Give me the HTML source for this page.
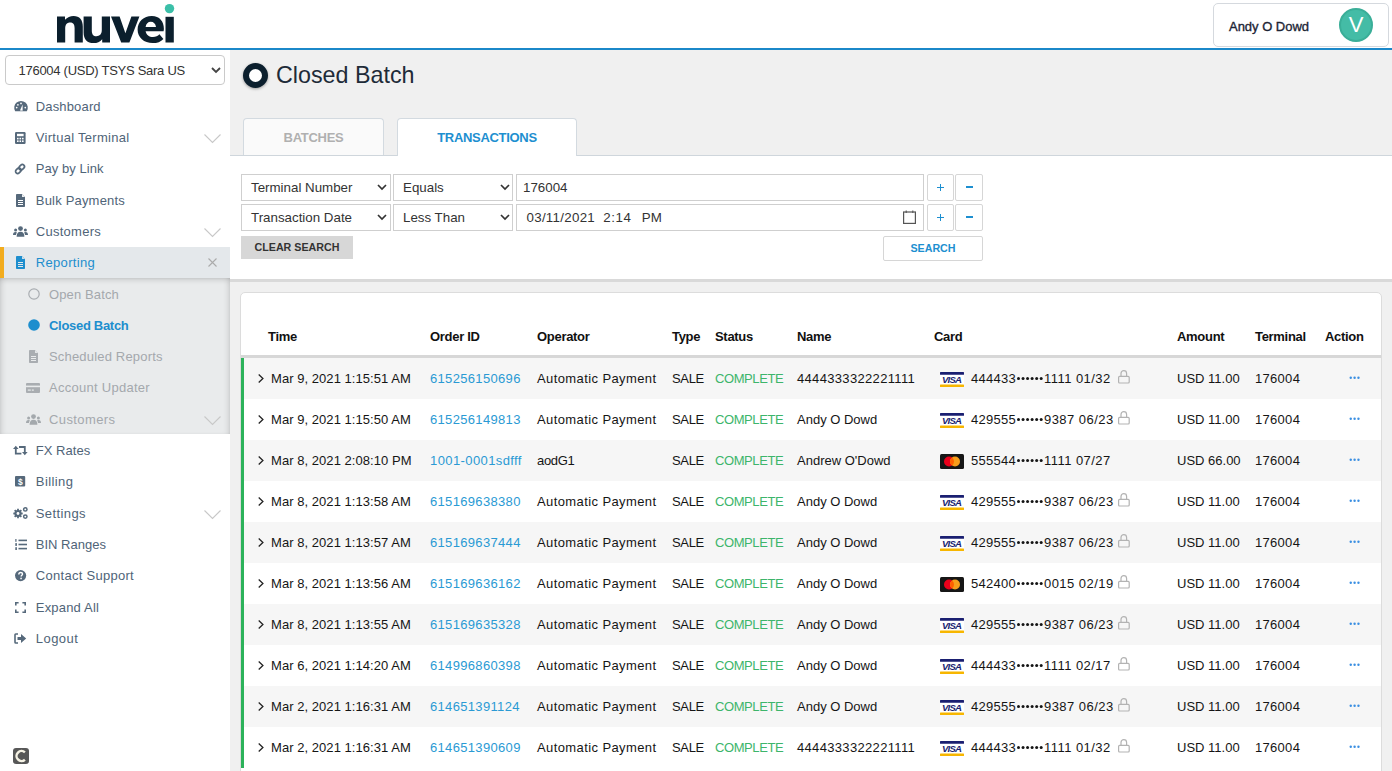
<!DOCTYPE html>
<html><head><meta charset="utf-8"><style>
*{box-sizing:border-box;margin:0;padding:0}
html,body{width:1392px;height:771px;overflow:hidden;background:#f0f0f0;font-family:"Liberation Sans",sans-serif;color:#111}
.a{position:absolute}
svg{position:absolute;overflow:visible}
#hdr{position:absolute;left:0;top:0;width:1392px;height:48px;background:#fff}
#bline{position:absolute;left:0;top:48px;width:1392px;height:2px;background:#1b88c9}
#side{position:absolute;left:0;top:50px;width:230px;height:721px;background:#fff}
.nav{position:absolute;left:0;width:230px;height:31.32px;line-height:31.32px;font-size:13px;color:#4f6478;white-space:nowrap}
.nav .t{position:absolute;left:35.8px;top:0}
.sub .t{left:49px;color:#a4a8ac}
.tab{position:absolute;top:118px;height:38px;border:1px solid #d3dae0;border-bottom:none;border-radius:4px 4px 0 0;font-size:13px;letter-spacing:-0.3px;font-weight:bold;text-align:center;line-height:37px}
.sel{position:absolute;height:27px;border:1px solid #cfcfcf;background:#fff;font-size:13.33px;color:#333;line-height:25px;padding-left:9px;white-space:nowrap}
.sel svg{right:4px}
.btn{position:absolute;border:1px solid #d6d6d6;border-radius:2px;background:#fff;color:#1d8fd0;font-weight:bold;text-align:center}
#card{position:absolute;left:240px;top:292px;width:1142px;height:500px;background:#fff;border:1px solid #dcdcdc;border-radius:5px}
.th{position:absolute;top:327px;font-size:13px;font-weight:bold;color:#111;line-height:20px;white-space:nowrap;letter-spacing:-0.3px}
.row{position:absolute;left:241px;width:1140px;height:41px}
.row.g{background:#f6f6f6}
.c{position:absolute;top:0;line-height:41px;font-size:13px;color:#151515;white-space:nowrap}
</style></head><body>
<div id="hdr"></div><div id="bline"></div><div id="side"></div>
<svg class="a" style="left:0;top:0" width="240" height="48" viewBox="0 0 240 48">
<g fill="#0b1f2d">
<path d="M57,42.5 V16.5 H65 V19.8 C67.2,17.2 70.3,15.9 73.6,15.9 C79.6,15.9 82.8,19.9 82.8,26.6 V42.5 H74.6 V28.2 C74.6,24.3 72.9,22.6 70.1,22.6 C67,22.6 65.2,24.6 65.2,28.6 V42.5 Z"/>
<path d="M83.6,16.5 H91.8 V30.4 C91.8,34.4 93.4,36.2 96.4,36.2 C99.6,36.2 101.8,34.1 101.8,30 V16.5 H110 V42.5 H102.2 V39.2 C100,41.8 97.1,43.1 93.6,43.1 C87.4,43.1 83.6,39.3 83.6,32.4 Z"/>
<path d="M111,16.5 H119.6 L125.4,33.2 L131.4,16.5 H139.4 L129.4,42.5 H121.2 Z"/>
<path d="M163.6,31.2 H145.6 C146.4,34.8 149.1,37 153,37 C155.8,37 157.8,36 159.4,34.3 L163.4,38.9 C160.9,41.7 157.2,43.1 152.7,43.1 C144,43.1 137.6,37.5 137.6,29.5 C137.6,21.6 143.7,15.9 151.8,15.9 C159.6,15.9 163.9,21.2 163.9,29 C163.9,29.7 163.7,30.5 163.6,31.2 Z M145.6,27 H156 C155.6,23.8 153.6,21.8 150.8,21.8 C148,21.8 146,23.8 145.6,27 Z"/>
<rect x="165.5" y="16.8" width="8.3" height="25.7"/>
</g>
<circle cx="169.5" cy="8.6" r="4.7" fill="#3bbfa8"/>
</svg>
<div class="a" style="left:1213px;top:3px;width:176px;height:44px;border:1px solid #d5d9de;border-radius:5px;background:#fff"></div>
<div class="a" style="left:1229px;top:18.2px;font-size:13px;color:#1c2535;line-height:18px;letter-spacing:-0.02px;-webkit-text-stroke:0.35px #1c2535">Andy O Dowd</div>
<div class="a" style="left:1339px;top:8px;width:34px;height:34px;border-radius:50%;background:#44bca6;border:2px solid #3aae98"></div>
<div class="a" style="left:1339px;top:8px;width:34px;height:34px;line-height:34px;text-align:center;color:#fff;font-size:22px">V</div>
<div class="a" style="left:5px;top:55px;width:220px;height:30px;border:1px solid #cacaca;border-radius:4px;background:#fff"></div>
<div class="a" style="left:18.5px;top:60.7px;line-height:20px;font-size:13px;color:#333;white-space:nowrap;letter-spacing:-0.27px">176004 (USD) TSYS Sara US</div>
<svg style="left:211px;top:67px" width="10" height="7" viewBox="0 0 10 7"><path d="M1,1 L5,5 L9,1" fill="none" stroke="#444" stroke-width="1.8"/></svg>
<div class="a" style="left:0;top:247px;width:230px;height:31px;background:#e4e8eb"></div>
<div class="a" style="left:0;top:247px;width:4px;height:31px;background:#f2ac1e"></div>
<div class="a" style="left:0;top:278px;width:230px;height:156px;background:#e9ebec;box-shadow:inset 0 5px 6px -4px rgba(0,0,0,0.18), inset 5px 0 7px -5px rgba(0,0,0,0.2), inset -5px 0 7px -5px rgba(0,0,0,0.2)"></div>
<div class="nav" style="top:90.59px"><span class="t" style=";letter-spacing:0.15px">Dashboard</span></div>
<svg style="left:13.6px;top:101.25px" width="14" height="11" viewBox="0 0 14 11"><path d="M1.2,10.3 A6.8,6.8 0 1 1 12.8,10.3 Z" fill="#56697b"/><path d="M6,9.6 L8.6,3.4 L8.6,9.8 Z" fill="#fff"/><circle cx="2.7" cy="6.6" r="0.85" fill="#fff"/><circle cx="3.9" cy="3.8" r="0.85" fill="#fff"/><circle cx="11.3" cy="6.6" r="0.85" fill="#fff"/><circle cx="7" cy="2.4" r="0.85" fill="#fff"/></svg>
<div class="nav" style="top:121.91px"><span class="t" style=";letter-spacing:0.28px">Virtual Terminal</span></div>
<svg style="left:15px;top:131.57px" width="11" height="12" viewBox="0 0 11 12"><rect x="0" y="0" width="10.6" height="12" rx="1.2" fill="#56697b"/><rect x="2" y="1.8" width="6.6" height="2.4" fill="#fff"/><g fill="#fff"><rect x="2" y="5.8" width="1.6" height="1.6"/><rect x="4.5" y="5.8" width="1.6" height="1.6"/><rect x="7" y="5.8" width="1.6" height="1.6"/><rect x="2" y="8.4" width="1.6" height="1.6"/><rect x="4.5" y="8.4" width="1.6" height="1.6"/><rect x="7" y="8.4" width="1.6" height="1.6"/></g></svg>
<svg style="left:204px;top:134.47px" width="17" height="9" viewBox="0 0 17 9"><path d="M0.5,0.5 L8.5,8.5 L16.5,0.5" fill="none" stroke="#c8c8c8" stroke-width="1.1"/></svg>
<div class="nav" style="top:153.23px"><span class="t" style=";letter-spacing:0.04px">Pay by Link</span></div>
<svg style="left:14px;top:162.89px" width="12" height="12" viewBox="0 0 12 12"><g fill="none" stroke="#56697b" stroke-width="1.7" transform="rotate(-45 6 6)"><rect x="0.6" y="3.9" width="6" height="4.2" rx="2.1"/><rect x="5.4" y="3.9" width="6" height="4.2" rx="2.1"/></g></svg>
<div class="nav" style="top:184.55px"><span class="t" style=";letter-spacing:0.19px">Bulk Payments</span></div>
<svg style="left:16px;top:193.71px" width="9" height="13" viewBox="0 0 9 13"><path d="M0,0.8 Q0,0 0.8,0 H6 L9,3 V12.2 Q9,13 8.2,13 H0.8 Q0,13 0,12.2 Z" fill="#56697b"/><path d="M6,0 V3 H9" fill="#fff" opacity="0.9"/><g fill="#fff"><rect x="2" y="6" width="5" height="1"/><rect x="2" y="8" width="5" height="1"/><rect x="2" y="10" width="5" height="1"/></g></svg>
<div class="nav" style="top:215.87px"><span class="t" style=";letter-spacing:0.26px">Customers</span></div>
<svg style="left:13px;top:226.03px" width="15" height="11" viewBox="0 0 15 11"><g fill="#56697b"><circle cx="7.5" cy="2.6" r="2.4"/><path d="M3.6,10.8 C3.6,7.4 5,5.8 7.5,5.8 C10,5.8 11.4,7.4 11.4,10.8 Z"/><circle cx="2.6" cy="4" r="1.5"/><circle cx="12.4" cy="4" r="1.5"/><path d="M0,9 C0,7 0.8,6 2.4,6 C3.2,6 3.8,6.3 4,6.6 C3.3,7.3 3,8.3 2.9,9 Z"/><path d="M15,9 C15,7 14.2,6 12.6,6 C11.8,6 11.2,6.3 11,6.6 C11.7,7.3 12,8.3 12.1,9 Z"/></g></svg>
<svg style="left:204px;top:228.43px" width="17" height="9" viewBox="0 0 17 9"><path d="M0.5,0.5 L8.5,8.5 L16.5,0.5" fill="none" stroke="#c8c8c8" stroke-width="1.1"/></svg>
<div class="nav" style="top:247.19px"><span class="t" style="color:#1d8ece;letter-spacing:0.32px">Reporting</span></div>
<svg style="left:16px;top:256.35px" width="9" height="13" viewBox="0 0 9 13"><path d="M0,0.8 Q0,0 0.8,0 H6 L9,3 V12.2 Q9,13 8.2,13 H0.8 Q0,13 0,12.2 Z" fill="#1d8ece"/><path d="M6,0 V3 H9" fill="#e4e8eb" opacity="0.9"/><g fill="#e4e8eb"><rect x="2" y="6" width="5" height="1"/><rect x="2" y="8" width="5" height="1"/><rect x="2" y="10" width="5" height="1"/></g></svg>
<div class="nav sub" style="top:278.51px"><span class="t" style=";letter-spacing:0.12px">Open Batch</span></div>
<svg style="left:27.5px;top:288.17px" width="12" height="12" viewBox="0 0 12 12"><circle cx="6" cy="6" r="5.2" fill="none" stroke="#a9adb1" stroke-width="1.2"/></svg>
<div class="nav sub" style="top:309.83px"><span class="t" style="color:#1d8ece;font-weight:bold;letter-spacing:-0.3px">Closed Batch</span></div>
<svg style="left:27.5px;top:319.49px" width="12" height="12" viewBox="0 0 12 12"><circle cx="6" cy="6" r="5.8" fill="#1d8ece"/></svg>
<div class="nav sub" style="top:341.15px"><span class="t" style=";letter-spacing:0.18px">Scheduled Reports</span></div>
<svg style="left:29px;top:350.31px" width="9" height="13" viewBox="0 0 9 13"><path d="M0,0.8 Q0,0 0.8,0 H6 L9,3 V12.2 Q9,13 8.2,13 H0.8 Q0,13 0,12.2 Z" fill="#a9adb1"/><path d="M6,0 V3 H9" fill="#e9ebec" opacity="0.9"/><g fill="#e9ebec"><rect x="2" y="6" width="5" height="1"/><rect x="2" y="8" width="5" height="1"/><rect x="2" y="10" width="5" height="1"/></g></svg>
<div class="nav sub" style="top:372.47px"><span class="t" style=";letter-spacing:0.27px">Account Updater</span></div>
<svg style="left:26px;top:383.13px" width="14" height="10" viewBox="0 0 14 10"><rect x="0" y="0" width="14" height="10" rx="1" fill="#a9adb1"/><rect x="0" y="2.6" width="14" height="1.6" fill="#e9ebec"/><rect x="1.8" y="6.5" width="3" height="1.2" fill="#e9ebec"/><rect x="5.8" y="6.5" width="2" height="1.2" fill="#e9ebec"/></svg>
<div class="nav sub" style="top:403.79px"><span class="t" style=";letter-spacing:0.4px">Customers</span></div>
<svg style="left:26px;top:413.95px" width="15" height="11" viewBox="0 0 15 11"><g fill="#a4a9ad"><circle cx="7.5" cy="2.6" r="2.4"/><path d="M3.6,10.8 C3.6,7.4 5,5.8 7.5,5.8 C10,5.8 11.4,7.4 11.4,10.8 Z"/><circle cx="2.6" cy="4" r="1.5"/><circle cx="12.4" cy="4" r="1.5"/><path d="M0,9 C0,7 0.8,6 2.4,6 C3.2,6 3.8,6.3 4,6.6 C3.3,7.3 3,8.3 2.9,9 Z"/><path d="M15,9 C15,7 14.2,6 12.6,6 C11.8,6 11.2,6.3 11,6.6 C11.7,7.3 12,8.3 12.1,9 Z"/></g></svg>
<svg style="left:204px;top:416.35px" width="17" height="9" viewBox="0 0 17 9"><path d="M0.5,0.5 L8.5,8.5 L16.5,0.5" fill="none" stroke="#c8c8c8" stroke-width="1.1"/></svg>
<div class="nav" style="top:435.11px"><span class="t" style=";letter-spacing:0.03px">FX Rates</span></div>
<svg style="left:12.5px;top:444.97px" width="15" height="11" viewBox="0 0 15 11"><g fill="none" stroke="#56697b" stroke-width="1.8"><path d="M2.8,3 V8.6 H8.4"/><path d="M6,2 H11.8 V7.8"/></g><path d="M0,4 L2.8,0.8 L5.6,4 Z" fill="#56697b"/><path d="M9,7 L11.8,10.3 L14.6,7 Z" fill="#56697b"/></svg>
<div class="nav" style="top:466.43px"><span class="t" style=";letter-spacing:0.42px">Billing</span></div>
<svg style="left:15px;top:476.09px" width="11" height="11" viewBox="0 0 11 11"><rect x="0" y="0" width="10.2" height="10.5" rx="1" fill="#56697b"/><text x="5.25" y="8.8" font-size="8.5" font-weight="bold" font-family="Liberation Sans" fill="#fff" text-anchor="middle">$</text></svg>
<div class="nav" style="top:497.75px"><span class="t" style=";letter-spacing:0.4px">Settings</span></div>
<svg style="left:12.5px;top:507.41px" width="15" height="12" viewBox="0 0 15 12"><g fill="#56697b"><circle cx="5" cy="6.5" r="3.6"/><g stroke="#56697b" stroke-width="1.8"><path d="M5,1.8 V11.2"/><path d="M0.3,6.5 H9.7"/><path d="M1.7,3.2 L8.3,9.8"/><path d="M8.3,3.2 L1.7,9.8"/></g></g><circle cx="5" cy="6.5" r="1.4" fill="#fff"/><g fill="none" stroke="#56697b" stroke-width="1.5"><circle cx="12.3" cy="2.4" r="1.7"/><circle cx="12.3" cy="9.6" r="1.7"/></g></svg>
<svg style="left:204px;top:510.31px" width="17" height="9" viewBox="0 0 17 9"><path d="M0.5,0.5 L8.5,8.5 L16.5,0.5" fill="none" stroke="#c8c8c8" stroke-width="1.1"/></svg>
<div class="nav" style="top:529.07px"><span class="t" style="">BIN Ranges</span></div>
<svg style="left:15px;top:539.23px" width="12" height="11" viewBox="0 0 12 11"><g fill="#56697b"><rect x="3.5" y="0.6" width="8.5" height="1.6"/><rect x="3.5" y="4.7" width="8.5" height="1.6"/><rect x="3.5" y="8.8" width="8.5" height="1.6"/><rect x="0.3" y="0" width="1.2" height="2.8"/><rect x="0.3" y="4.1" width="1.6" height="2.8"/><rect x="0.3" y="8.2" width="1.6" height="2.8"/></g></svg>
<div class="nav" style="top:560.39px"><span class="t" style=";letter-spacing:0.28px">Contact Support</span></div>
<svg style="left:14.6px;top:570.45px" width="11.2" height="11.2" viewBox="0 0 12 12"><circle cx="6" cy="6" r="6" fill="#56697b"/><path d="M4.1,4.7 C4.1,3.4 5,2.7 6.1,2.7 C7.3,2.7 8.1,3.4 8.1,4.4 C8.1,5.6 6.6,5.8 6.6,7" fill="none" stroke="#fff" stroke-width="1.5"/><circle cx="6.5" cy="9" r="0.9" fill="#fff"/></svg>
<div class="nav" style="top:591.71px"><span class="t" style=";letter-spacing:0.18px">Expand All</span></div>
<svg style="left:15px;top:601.87px" width="11" height="11" viewBox="0 0 11 11"><g fill="none" stroke="#56697b" stroke-width="1.6"><path d="M0.8,3.6 V0.8 H3.6"/><path d="M7.4,0.8 H10.2 V3.6"/><path d="M10.2,7.4 V10.2 H7.4"/><path d="M3.6,10.2 H0.8 V7.4"/></g></svg>
<div class="nav" style="top:623.03px"><span class="t" style=";letter-spacing:0.45px">Logout</span></div>
<svg style="left:14px;top:633.19px" width="13" height="11" viewBox="0 0 13 11"><path d="M4,1 H1.8 Q1,1 1,1.8 V9.2 Q1,10 1.8,10 H4" fill="none" stroke="#56697b" stroke-width="1.6"/><path d="M3.5,4 H7 V1 L12.2,5.5 L7,10 V7 H3.5 Z" fill="#56697b"/></svg>
<svg style="left:208px;top:257.5px" width="9" height="9" viewBox="0 0 9 9"><path d="M0.5,0.5 L8.5,8.5 M8.5,0.5 L0.5,8.5" stroke="#ababab" stroke-width="1.1"/></svg>
<div class="a" style="left:13px;top:748px;width:16px;height:16px;border-radius:3px;background:#575757"></div>
<svg style="left:13px;top:748px" width="16" height="16" viewBox="0 0 16 16"><path d="M11.9,4.3 A5,5 0 1 0 11.9,11.7" fill="none" stroke="#f5f2e4" stroke-width="2.5"/></svg>
<div class="a" style="left:243px;top:63px;width:25px;height:25px;border-radius:50%;border:6px solid #0b1f2d;background:#fff;box-shadow:0 1px 3px rgba(0,0,0,0.35)"></div>
<div class="a" style="left:275.6px;top:59.5px;font-size:24px;line-height:30px;color:#1e2b38;white-space:nowrap;transform:scaleX(0.97);transform-origin:0 0">Closed Batch</div>
<div class="tab" style="left:243px;width:141px;background:#fafafa;color:#b0b0b0">BATCHES</div>
<div class="a" style="left:230px;top:155px;width:1162px;height:124px;background:#fff;border-top:1px solid #cfd6dc"></div>
<div class="a" style="left:230px;top:279px;width:1162px;height:3px;background:#d9d9d9"></div>
<div class="tab" style="left:397px;width:180px;background:#fff;color:#1d8fd0;height:38px">TRANSACTIONS</div>
<div class="sel" style="left:241px;top:174px;width:150px">Terminal Number</div><svg style="left:377px;top:184px" width="10" height="7" viewBox="0 0 10 7"><path d="M1,1 L5,5 L9,1" fill="none" stroke="#333" stroke-width="1.7"/></svg>
<div class="sel" style="left:393px;top:174px;width:120px">Equals</div><svg style="left:499.5px;top:184px" width="10" height="7" viewBox="0 0 10 7"><path d="M1,1 L5,5 L9,1" fill="none" stroke="#333" stroke-width="1.7"/></svg>
<div class="sel" style="left:516px;top:174px;width:408px;padding-left:6px">176004</div>
<div class="sel" style="left:241px;top:204px;width:150px">Transaction Date</div><svg style="left:377px;top:214px" width="10" height="7" viewBox="0 0 10 7"><path d="M1,1 L5,5 L9,1" fill="none" stroke="#333" stroke-width="1.7"/></svg>
<div class="sel" style="left:393px;top:204px;width:120px">Less Than</div><svg style="left:499.5px;top:214px" width="10" height="7" viewBox="0 0 10 7"><path d="M1,1 L5,5 L9,1" fill="none" stroke="#333" stroke-width="1.7"/></svg>
<div class="sel" style="left:516px;top:204px;width:408px;padding-left:0"></div>
<div class="a" style="left:526.5px;top:205px;font-size:13.33px;line-height:25px;color:#333;letter-spacing:0.28px">03/11/2021</div><div class="a" style="left:603.2px;top:205px;font-size:13.33px;line-height:25px;color:#333;letter-spacing:0.6px">2:14</div><div class="a" style="left:641.8px;top:205px;font-size:13.33px;line-height:25px;color:#333">PM</div>
<svg style="left:903px;top:210px" width="13" height="14" viewBox="0 0 13 14"><rect x="0.6" y="2" width="11.8" height="11.4" fill="none" stroke="#555" stroke-width="1.2"/><path d="M3.2,0.5 V3 M9.8,0.5 V3" stroke="#555" stroke-width="1.1"/></svg>
<div class="btn" style="left:927px;top:174px;width:27px;height:27px"></div><div class="a" style="left:937px;top:186.5px;width:6.8px;height:1.7px;background:#1d8fd0"></div><div class="a" style="left:939.55px;top:183.5px;width:1.7px;height:7.6px;background:#1d8fd0"></div>
<div class="btn" style="left:955px;top:174px;width:28px;height:27px;"></div><div class="a" style="left:965.5px;top:186.3px;width:7.5px;height:2px;background:#1d8fd0"></div>
<div class="btn" style="left:927px;top:204px;width:27px;height:27px"></div><div class="a" style="left:937px;top:216.5px;width:6.8px;height:1.7px;background:#1d8fd0"></div><div class="a" style="left:939.55px;top:213.5px;width:1.7px;height:7.6px;background:#1d8fd0"></div>
<div class="btn" style="left:955px;top:204px;width:28px;height:27px;"></div><div class="a" style="left:965.5px;top:216.3px;width:7.5px;height:2px;background:#1d8fd0"></div>
<div class="a" style="left:241px;top:236px;width:112px;height:23px;background:#d7d7d7;color:#333;font-size:10.7px;font-weight:bold;line-height:23px;text-align:center">CLEAR SEARCH</div>
<div class="btn" style="left:883px;top:236px;width:100px;height:25px;font-size:10.7px;line-height:23px">SEARCH</div>
<div id="card"></div>
<div class="th" style="left:268px">Time</div>
<div class="th" style="left:430px">Order ID</div>
<div class="th" style="left:537px">Operator</div>
<div class="th" style="left:672px">Type</div>
<div class="th" style="left:715px">Status</div>
<div class="th" style="left:797px">Name</div>
<div class="th" style="left:934px">Card</div>
<div class="th" style="left:1177px">Amount</div>
<div class="th" style="left:1255px">Terminal</div>
<div class="th" style="left:1325px">Action</div>
<div class="a" style="left:241px;top:355px;width:1140px;height:3px;background:#d7d7d7"></div>
<div class="row g" style="top:358px"></div>
<svg style="left:257.5px;top:374px" width="6" height="9" viewBox="0 0 6 9"><path d="M0.7,0.6 L4.9,4.5 L0.7,8.4" fill="none" stroke="#222" stroke-width="1.3"/></svg>
<div class="c" style="left:271px;top:358px;letter-spacing:0.05px">Mar 9, 2021 1:15:51 AM</div>
<div class="c" style="left:430px;top:358px;color:#2a9ad4;letter-spacing:0.33px">615256150696</div>
<div class="c" style="left:537px;top:358px;letter-spacing:0.4px">Automatic Payment</div>
<div class="c" style="left:672px;top:358px;letter-spacing:-0.35px">SALE</div>
<div class="c" style="left:715px;top:358px;color:#3db56b;letter-spacing:-0.42px">COMPLETE</div>
<div class="c" style="left:797px;top:358px;letter-spacing:0.33px">4444333322221111</div>
<svg style="left:940px;top:371.5px" width="24" height="15" viewBox="0 0 24 15"><rect x="0" y="0" width="24" height="15" fill="#fff"/><rect x="0" y="0" width="24" height="2.8" rx="0.5" fill="#1a1f71"/><rect x="0" y="12.6" width="24" height="2.4" rx="0.5" fill="#f7b600"/><text x="11.6" y="11" font-size="9.6" font-weight="bold" font-style="italic" font-family="Liberation Sans" fill="#1a1f71" text-anchor="middle" letter-spacing="-0.75">VISA</text></svg>
<div class="c" style="left:971px;top:358px;letter-spacing:0.25px">444433</div>
<svg style="left:1016.6px;top:376.9px" width="27" height="3" viewBox="0 0 27 3"><g fill="#151515"><circle cx="1.50" cy="1.5" r="1.5"/><circle cx="6.04" cy="1.5" r="1.5"/><circle cx="10.58" cy="1.5" r="1.5"/><circle cx="15.12" cy="1.5" r="1.5"/><circle cx="19.66" cy="1.5" r="1.5"/><circle cx="24.20" cy="1.5" r="1.5"/></g></svg>
<div class="c" style="left:1044px;top:358px;letter-spacing:0.45px">1111 01/32</div>
<svg style="left:1118px;top:370.2px" width="12" height="14" viewBox="0 0 12 14"><path d="M3,6.6 V3.4 A2.8,2.8 0 0 1 8.6,3.4 V6.6" fill="none" stroke="#b3b3b3" stroke-width="1.2"/><rect x="0.6" y="6.4" width="10.6" height="6.6" rx="1" fill="none" stroke="#b3b3b3" stroke-width="1.2"/></svg>
<div class="c" style="left:1177px;top:358px">USD 11.00</div>
<div class="c" style="left:1255px;top:358px;letter-spacing:0.3px">176004</div>
<svg style="left:1349px;top:375.5px" width="11" height="4" viewBox="0 0 11 4"><g fill="#3b8fe2"><circle cx="1.75" cy="1.8" r="1.2"/><circle cx="5.6" cy="1.8" r="1.2"/><circle cx="9.45" cy="1.8" r="1.2"/></g></svg>
<div class="row" style="top:399px"></div>
<svg style="left:257.5px;top:415px" width="6" height="9" viewBox="0 0 6 9"><path d="M0.7,0.6 L4.9,4.5 L0.7,8.4" fill="none" stroke="#222" stroke-width="1.3"/></svg>
<div class="c" style="left:271px;top:399px;letter-spacing:0.05px">Mar 9, 2021 1:15:50 AM</div>
<div class="c" style="left:430px;top:399px;color:#2a9ad4;letter-spacing:0.33px">615256149813</div>
<div class="c" style="left:537px;top:399px;letter-spacing:0.4px">Automatic Payment</div>
<div class="c" style="left:672px;top:399px;letter-spacing:-0.35px">SALE</div>
<div class="c" style="left:715px;top:399px;color:#3db56b;letter-spacing:-0.42px">COMPLETE</div>
<div class="c" style="left:797px;top:399px;letter-spacing:0px">Andy O Dowd</div>
<svg style="left:940px;top:412.5px" width="24" height="15" viewBox="0 0 24 15"><rect x="0" y="0" width="24" height="15" fill="#fff"/><rect x="0" y="0" width="24" height="2.8" rx="0.5" fill="#1a1f71"/><rect x="0" y="12.6" width="24" height="2.4" rx="0.5" fill="#f7b600"/><text x="11.6" y="11" font-size="9.6" font-weight="bold" font-style="italic" font-family="Liberation Sans" fill="#1a1f71" text-anchor="middle" letter-spacing="-0.75">VISA</text></svg>
<div class="c" style="left:971px;top:399px;letter-spacing:0.25px">429555</div>
<svg style="left:1016.6px;top:417.9px" width="27" height="3" viewBox="0 0 27 3"><g fill="#151515"><circle cx="1.50" cy="1.5" r="1.5"/><circle cx="6.04" cy="1.5" r="1.5"/><circle cx="10.58" cy="1.5" r="1.5"/><circle cx="15.12" cy="1.5" r="1.5"/><circle cx="19.66" cy="1.5" r="1.5"/><circle cx="24.20" cy="1.5" r="1.5"/></g></svg>
<div class="c" style="left:1044px;top:399px;letter-spacing:0.45px">9387 06/23</div>
<svg style="left:1118px;top:411.2px" width="12" height="14" viewBox="0 0 12 14"><path d="M3,6.6 V3.4 A2.8,2.8 0 0 1 8.6,3.4 V6.6" fill="none" stroke="#b3b3b3" stroke-width="1.2"/><rect x="0.6" y="6.4" width="10.6" height="6.6" rx="1" fill="none" stroke="#b3b3b3" stroke-width="1.2"/></svg>
<div class="c" style="left:1177px;top:399px">USD 11.00</div>
<div class="c" style="left:1255px;top:399px;letter-spacing:0.3px">176004</div>
<svg style="left:1349px;top:416.5px" width="11" height="4" viewBox="0 0 11 4"><g fill="#3b8fe2"><circle cx="1.75" cy="1.8" r="1.2"/><circle cx="5.6" cy="1.8" r="1.2"/><circle cx="9.45" cy="1.8" r="1.2"/></g></svg>
<div class="row g" style="top:440px"></div>
<svg style="left:257.5px;top:456px" width="6" height="9" viewBox="0 0 6 9"><path d="M0.7,0.6 L4.9,4.5 L0.7,8.4" fill="none" stroke="#222" stroke-width="1.3"/></svg>
<div class="c" style="left:271px;top:440px;letter-spacing:0.05px">Mar 8, 2021 2:08:10 PM</div>
<div class="c" style="left:430px;top:440px;color:#2a9ad4;letter-spacing:0.4px">1001-0001sdfff</div>
<div class="c" style="left:537px;top:440px;letter-spacing:-0.3px">aodG1</div>
<div class="c" style="left:672px;top:440px;letter-spacing:-0.35px">SALE</div>
<div class="c" style="left:715px;top:440px;color:#3db56b;letter-spacing:-0.42px">COMPLETE</div>
<div class="c" style="left:797px;top:440px;letter-spacing:0px">Andrew O'Dowd</div>
<svg style="left:940px;top:453.5px" width="24" height="15" viewBox="0 0 24 15"><rect x="0" y="0" width="24" height="15" rx="1.5" fill="#161616"/><circle cx="9" cy="7.5" r="5" fill="#eb001b"/><circle cx="15" cy="7.5" r="5" fill="#f79e1b"/><path d="M12,3.5 A5,5 0 0 1 12,11.5 A5,5 0 0 1 12,3.5 Z" fill="#ff5f00"/></svg>
<div class="c" style="left:971px;top:440px;letter-spacing:0.25px">555544</div>
<svg style="left:1016.6px;top:458.9px" width="27" height="3" viewBox="0 0 27 3"><g fill="#151515"><circle cx="1.50" cy="1.5" r="1.5"/><circle cx="6.04" cy="1.5" r="1.5"/><circle cx="10.58" cy="1.5" r="1.5"/><circle cx="15.12" cy="1.5" r="1.5"/><circle cx="19.66" cy="1.5" r="1.5"/><circle cx="24.20" cy="1.5" r="1.5"/></g></svg>
<div class="c" style="left:1044px;top:440px;letter-spacing:0.45px">1111 07/27</div>
<div class="c" style="left:1177px;top:440px">USD 66.00</div>
<div class="c" style="left:1255px;top:440px;letter-spacing:0.3px">176004</div>
<svg style="left:1349px;top:457.5px" width="11" height="4" viewBox="0 0 11 4"><g fill="#3b8fe2"><circle cx="1.75" cy="1.8" r="1.2"/><circle cx="5.6" cy="1.8" r="1.2"/><circle cx="9.45" cy="1.8" r="1.2"/></g></svg>
<div class="row" style="top:481px"></div>
<svg style="left:257.5px;top:497px" width="6" height="9" viewBox="0 0 6 9"><path d="M0.7,0.6 L4.9,4.5 L0.7,8.4" fill="none" stroke="#222" stroke-width="1.3"/></svg>
<div class="c" style="left:271px;top:481px;letter-spacing:0.05px">Mar 8, 2021 1:13:58 AM</div>
<div class="c" style="left:430px;top:481px;color:#2a9ad4;letter-spacing:0.33px">615169638380</div>
<div class="c" style="left:537px;top:481px;letter-spacing:0.4px">Automatic Payment</div>
<div class="c" style="left:672px;top:481px;letter-spacing:-0.35px">SALE</div>
<div class="c" style="left:715px;top:481px;color:#3db56b;letter-spacing:-0.42px">COMPLETE</div>
<div class="c" style="left:797px;top:481px;letter-spacing:0px">Andy O Dowd</div>
<svg style="left:940px;top:494.5px" width="24" height="15" viewBox="0 0 24 15"><rect x="0" y="0" width="24" height="15" fill="#fff"/><rect x="0" y="0" width="24" height="2.8" rx="0.5" fill="#1a1f71"/><rect x="0" y="12.6" width="24" height="2.4" rx="0.5" fill="#f7b600"/><text x="11.6" y="11" font-size="9.6" font-weight="bold" font-style="italic" font-family="Liberation Sans" fill="#1a1f71" text-anchor="middle" letter-spacing="-0.75">VISA</text></svg>
<div class="c" style="left:971px;top:481px;letter-spacing:0.25px">429555</div>
<svg style="left:1016.6px;top:499.9px" width="27" height="3" viewBox="0 0 27 3"><g fill="#151515"><circle cx="1.50" cy="1.5" r="1.5"/><circle cx="6.04" cy="1.5" r="1.5"/><circle cx="10.58" cy="1.5" r="1.5"/><circle cx="15.12" cy="1.5" r="1.5"/><circle cx="19.66" cy="1.5" r="1.5"/><circle cx="24.20" cy="1.5" r="1.5"/></g></svg>
<div class="c" style="left:1044px;top:481px;letter-spacing:0.45px">9387 06/23</div>
<svg style="left:1118px;top:493.2px" width="12" height="14" viewBox="0 0 12 14"><path d="M3,6.6 V3.4 A2.8,2.8 0 0 1 8.6,3.4 V6.6" fill="none" stroke="#b3b3b3" stroke-width="1.2"/><rect x="0.6" y="6.4" width="10.6" height="6.6" rx="1" fill="none" stroke="#b3b3b3" stroke-width="1.2"/></svg>
<div class="c" style="left:1177px;top:481px">USD 11.00</div>
<div class="c" style="left:1255px;top:481px;letter-spacing:0.3px">176004</div>
<svg style="left:1349px;top:498.5px" width="11" height="4" viewBox="0 0 11 4"><g fill="#3b8fe2"><circle cx="1.75" cy="1.8" r="1.2"/><circle cx="5.6" cy="1.8" r="1.2"/><circle cx="9.45" cy="1.8" r="1.2"/></g></svg>
<div class="row g" style="top:522px"></div>
<svg style="left:257.5px;top:538px" width="6" height="9" viewBox="0 0 6 9"><path d="M0.7,0.6 L4.9,4.5 L0.7,8.4" fill="none" stroke="#222" stroke-width="1.3"/></svg>
<div class="c" style="left:271px;top:522px;letter-spacing:0.05px">Mar 8, 2021 1:13:57 AM</div>
<div class="c" style="left:430px;top:522px;color:#2a9ad4;letter-spacing:0.33px">615169637444</div>
<div class="c" style="left:537px;top:522px;letter-spacing:0.4px">Automatic Payment</div>
<div class="c" style="left:672px;top:522px;letter-spacing:-0.35px">SALE</div>
<div class="c" style="left:715px;top:522px;color:#3db56b;letter-spacing:-0.42px">COMPLETE</div>
<div class="c" style="left:797px;top:522px;letter-spacing:0px">Andy O Dowd</div>
<svg style="left:940px;top:535.5px" width="24" height="15" viewBox="0 0 24 15"><rect x="0" y="0" width="24" height="15" fill="#fff"/><rect x="0" y="0" width="24" height="2.8" rx="0.5" fill="#1a1f71"/><rect x="0" y="12.6" width="24" height="2.4" rx="0.5" fill="#f7b600"/><text x="11.6" y="11" font-size="9.6" font-weight="bold" font-style="italic" font-family="Liberation Sans" fill="#1a1f71" text-anchor="middle" letter-spacing="-0.75">VISA</text></svg>
<div class="c" style="left:971px;top:522px;letter-spacing:0.25px">429555</div>
<svg style="left:1016.6px;top:540.9px" width="27" height="3" viewBox="0 0 27 3"><g fill="#151515"><circle cx="1.50" cy="1.5" r="1.5"/><circle cx="6.04" cy="1.5" r="1.5"/><circle cx="10.58" cy="1.5" r="1.5"/><circle cx="15.12" cy="1.5" r="1.5"/><circle cx="19.66" cy="1.5" r="1.5"/><circle cx="24.20" cy="1.5" r="1.5"/></g></svg>
<div class="c" style="left:1044px;top:522px;letter-spacing:0.45px">9387 06/23</div>
<svg style="left:1118px;top:534.2px" width="12" height="14" viewBox="0 0 12 14"><path d="M3,6.6 V3.4 A2.8,2.8 0 0 1 8.6,3.4 V6.6" fill="none" stroke="#b3b3b3" stroke-width="1.2"/><rect x="0.6" y="6.4" width="10.6" height="6.6" rx="1" fill="none" stroke="#b3b3b3" stroke-width="1.2"/></svg>
<div class="c" style="left:1177px;top:522px">USD 11.00</div>
<div class="c" style="left:1255px;top:522px;letter-spacing:0.3px">176004</div>
<svg style="left:1349px;top:539.5px" width="11" height="4" viewBox="0 0 11 4"><g fill="#3b8fe2"><circle cx="1.75" cy="1.8" r="1.2"/><circle cx="5.6" cy="1.8" r="1.2"/><circle cx="9.45" cy="1.8" r="1.2"/></g></svg>
<div class="row" style="top:563px"></div>
<svg style="left:257.5px;top:579px" width="6" height="9" viewBox="0 0 6 9"><path d="M0.7,0.6 L4.9,4.5 L0.7,8.4" fill="none" stroke="#222" stroke-width="1.3"/></svg>
<div class="c" style="left:271px;top:563px;letter-spacing:0.05px">Mar 8, 2021 1:13:56 AM</div>
<div class="c" style="left:430px;top:563px;color:#2a9ad4;letter-spacing:0.33px">615169636162</div>
<div class="c" style="left:537px;top:563px;letter-spacing:0.4px">Automatic Payment</div>
<div class="c" style="left:672px;top:563px;letter-spacing:-0.35px">SALE</div>
<div class="c" style="left:715px;top:563px;color:#3db56b;letter-spacing:-0.42px">COMPLETE</div>
<div class="c" style="left:797px;top:563px;letter-spacing:0px">Andy O Dowd</div>
<svg style="left:940px;top:576.5px" width="24" height="15" viewBox="0 0 24 15"><rect x="0" y="0" width="24" height="15" rx="1.5" fill="#161616"/><circle cx="9" cy="7.5" r="5" fill="#eb001b"/><circle cx="15" cy="7.5" r="5" fill="#f79e1b"/><path d="M12,3.5 A5,5 0 0 1 12,11.5 A5,5 0 0 1 12,3.5 Z" fill="#ff5f00"/></svg>
<div class="c" style="left:971px;top:563px;letter-spacing:0.25px">542400</div>
<svg style="left:1016.6px;top:581.9px" width="27" height="3" viewBox="0 0 27 3"><g fill="#151515"><circle cx="1.50" cy="1.5" r="1.5"/><circle cx="6.04" cy="1.5" r="1.5"/><circle cx="10.58" cy="1.5" r="1.5"/><circle cx="15.12" cy="1.5" r="1.5"/><circle cx="19.66" cy="1.5" r="1.5"/><circle cx="24.20" cy="1.5" r="1.5"/></g></svg>
<div class="c" style="left:1044px;top:563px;letter-spacing:0.45px">0015 02/19</div>
<svg style="left:1118px;top:575.2px" width="12" height="14" viewBox="0 0 12 14"><path d="M3,6.6 V3.4 A2.8,2.8 0 0 1 8.6,3.4 V6.6" fill="none" stroke="#b3b3b3" stroke-width="1.2"/><rect x="0.6" y="6.4" width="10.6" height="6.6" rx="1" fill="none" stroke="#b3b3b3" stroke-width="1.2"/></svg>
<div class="c" style="left:1177px;top:563px">USD 11.00</div>
<div class="c" style="left:1255px;top:563px;letter-spacing:0.3px">176004</div>
<svg style="left:1349px;top:580.5px" width="11" height="4" viewBox="0 0 11 4"><g fill="#3b8fe2"><circle cx="1.75" cy="1.8" r="1.2"/><circle cx="5.6" cy="1.8" r="1.2"/><circle cx="9.45" cy="1.8" r="1.2"/></g></svg>
<div class="row g" style="top:604px"></div>
<svg style="left:257.5px;top:620px" width="6" height="9" viewBox="0 0 6 9"><path d="M0.7,0.6 L4.9,4.5 L0.7,8.4" fill="none" stroke="#222" stroke-width="1.3"/></svg>
<div class="c" style="left:271px;top:604px;letter-spacing:0.05px">Mar 8, 2021 1:13:55 AM</div>
<div class="c" style="left:430px;top:604px;color:#2a9ad4;letter-spacing:0.33px">615169635328</div>
<div class="c" style="left:537px;top:604px;letter-spacing:0.4px">Automatic Payment</div>
<div class="c" style="left:672px;top:604px;letter-spacing:-0.35px">SALE</div>
<div class="c" style="left:715px;top:604px;color:#3db56b;letter-spacing:-0.42px">COMPLETE</div>
<div class="c" style="left:797px;top:604px;letter-spacing:0px">Andy O Dowd</div>
<svg style="left:940px;top:617.5px" width="24" height="15" viewBox="0 0 24 15"><rect x="0" y="0" width="24" height="15" fill="#fff"/><rect x="0" y="0" width="24" height="2.8" rx="0.5" fill="#1a1f71"/><rect x="0" y="12.6" width="24" height="2.4" rx="0.5" fill="#f7b600"/><text x="11.6" y="11" font-size="9.6" font-weight="bold" font-style="italic" font-family="Liberation Sans" fill="#1a1f71" text-anchor="middle" letter-spacing="-0.75">VISA</text></svg>
<div class="c" style="left:971px;top:604px;letter-spacing:0.25px">429555</div>
<svg style="left:1016.6px;top:622.9px" width="27" height="3" viewBox="0 0 27 3"><g fill="#151515"><circle cx="1.50" cy="1.5" r="1.5"/><circle cx="6.04" cy="1.5" r="1.5"/><circle cx="10.58" cy="1.5" r="1.5"/><circle cx="15.12" cy="1.5" r="1.5"/><circle cx="19.66" cy="1.5" r="1.5"/><circle cx="24.20" cy="1.5" r="1.5"/></g></svg>
<div class="c" style="left:1044px;top:604px;letter-spacing:0.45px">9387 06/23</div>
<svg style="left:1118px;top:616.2px" width="12" height="14" viewBox="0 0 12 14"><path d="M3,6.6 V3.4 A2.8,2.8 0 0 1 8.6,3.4 V6.6" fill="none" stroke="#b3b3b3" stroke-width="1.2"/><rect x="0.6" y="6.4" width="10.6" height="6.6" rx="1" fill="none" stroke="#b3b3b3" stroke-width="1.2"/></svg>
<div class="c" style="left:1177px;top:604px">USD 11.00</div>
<div class="c" style="left:1255px;top:604px;letter-spacing:0.3px">176004</div>
<svg style="left:1349px;top:621.5px" width="11" height="4" viewBox="0 0 11 4"><g fill="#3b8fe2"><circle cx="1.75" cy="1.8" r="1.2"/><circle cx="5.6" cy="1.8" r="1.2"/><circle cx="9.45" cy="1.8" r="1.2"/></g></svg>
<div class="row" style="top:645px"></div>
<svg style="left:257.5px;top:661px" width="6" height="9" viewBox="0 0 6 9"><path d="M0.7,0.6 L4.9,4.5 L0.7,8.4" fill="none" stroke="#222" stroke-width="1.3"/></svg>
<div class="c" style="left:271px;top:645px;letter-spacing:0.05px">Mar 6, 2021 1:14:20 AM</div>
<div class="c" style="left:430px;top:645px;color:#2a9ad4;letter-spacing:0.33px">614996860398</div>
<div class="c" style="left:537px;top:645px;letter-spacing:0.4px">Automatic Payment</div>
<div class="c" style="left:672px;top:645px;letter-spacing:-0.35px">SALE</div>
<div class="c" style="left:715px;top:645px;color:#3db56b;letter-spacing:-0.42px">COMPLETE</div>
<div class="c" style="left:797px;top:645px;letter-spacing:0px">Andy O Dowd</div>
<svg style="left:940px;top:658.5px" width="24" height="15" viewBox="0 0 24 15"><rect x="0" y="0" width="24" height="15" fill="#fff"/><rect x="0" y="0" width="24" height="2.8" rx="0.5" fill="#1a1f71"/><rect x="0" y="12.6" width="24" height="2.4" rx="0.5" fill="#f7b600"/><text x="11.6" y="11" font-size="9.6" font-weight="bold" font-style="italic" font-family="Liberation Sans" fill="#1a1f71" text-anchor="middle" letter-spacing="-0.75">VISA</text></svg>
<div class="c" style="left:971px;top:645px;letter-spacing:0.25px">444433</div>
<svg style="left:1016.6px;top:663.9px" width="27" height="3" viewBox="0 0 27 3"><g fill="#151515"><circle cx="1.50" cy="1.5" r="1.5"/><circle cx="6.04" cy="1.5" r="1.5"/><circle cx="10.58" cy="1.5" r="1.5"/><circle cx="15.12" cy="1.5" r="1.5"/><circle cx="19.66" cy="1.5" r="1.5"/><circle cx="24.20" cy="1.5" r="1.5"/></g></svg>
<div class="c" style="left:1044px;top:645px;letter-spacing:0.45px">1111 02/17</div>
<svg style="left:1118px;top:657.2px" width="12" height="14" viewBox="0 0 12 14"><path d="M3,6.6 V3.4 A2.8,2.8 0 0 1 8.6,3.4 V6.6" fill="none" stroke="#b3b3b3" stroke-width="1.2"/><rect x="0.6" y="6.4" width="10.6" height="6.6" rx="1" fill="none" stroke="#b3b3b3" stroke-width="1.2"/></svg>
<div class="c" style="left:1177px;top:645px">USD 11.00</div>
<div class="c" style="left:1255px;top:645px;letter-spacing:0.3px">176004</div>
<svg style="left:1349px;top:662.5px" width="11" height="4" viewBox="0 0 11 4"><g fill="#3b8fe2"><circle cx="1.75" cy="1.8" r="1.2"/><circle cx="5.6" cy="1.8" r="1.2"/><circle cx="9.45" cy="1.8" r="1.2"/></g></svg>
<div class="row g" style="top:686px"></div>
<svg style="left:257.5px;top:702px" width="6" height="9" viewBox="0 0 6 9"><path d="M0.7,0.6 L4.9,4.5 L0.7,8.4" fill="none" stroke="#222" stroke-width="1.3"/></svg>
<div class="c" style="left:271px;top:686px;letter-spacing:0.05px">Mar 2, 2021 1:16:31 AM</div>
<div class="c" style="left:430px;top:686px;color:#2a9ad4;letter-spacing:0.33px">614651391124</div>
<div class="c" style="left:537px;top:686px;letter-spacing:0.4px">Automatic Payment</div>
<div class="c" style="left:672px;top:686px;letter-spacing:-0.35px">SALE</div>
<div class="c" style="left:715px;top:686px;color:#3db56b;letter-spacing:-0.42px">COMPLETE</div>
<div class="c" style="left:797px;top:686px;letter-spacing:0px">Andy O Dowd</div>
<svg style="left:940px;top:699.5px" width="24" height="15" viewBox="0 0 24 15"><rect x="0" y="0" width="24" height="15" fill="#fff"/><rect x="0" y="0" width="24" height="2.8" rx="0.5" fill="#1a1f71"/><rect x="0" y="12.6" width="24" height="2.4" rx="0.5" fill="#f7b600"/><text x="11.6" y="11" font-size="9.6" font-weight="bold" font-style="italic" font-family="Liberation Sans" fill="#1a1f71" text-anchor="middle" letter-spacing="-0.75">VISA</text></svg>
<div class="c" style="left:971px;top:686px;letter-spacing:0.25px">429555</div>
<svg style="left:1016.6px;top:704.9px" width="27" height="3" viewBox="0 0 27 3"><g fill="#151515"><circle cx="1.50" cy="1.5" r="1.5"/><circle cx="6.04" cy="1.5" r="1.5"/><circle cx="10.58" cy="1.5" r="1.5"/><circle cx="15.12" cy="1.5" r="1.5"/><circle cx="19.66" cy="1.5" r="1.5"/><circle cx="24.20" cy="1.5" r="1.5"/></g></svg>
<div class="c" style="left:1044px;top:686px;letter-spacing:0.45px">9387 06/23</div>
<svg style="left:1118px;top:698.2px" width="12" height="14" viewBox="0 0 12 14"><path d="M3,6.6 V3.4 A2.8,2.8 0 0 1 8.6,3.4 V6.6" fill="none" stroke="#b3b3b3" stroke-width="1.2"/><rect x="0.6" y="6.4" width="10.6" height="6.6" rx="1" fill="none" stroke="#b3b3b3" stroke-width="1.2"/></svg>
<div class="c" style="left:1177px;top:686px">USD 11.00</div>
<div class="c" style="left:1255px;top:686px;letter-spacing:0.3px">176004</div>
<svg style="left:1349px;top:703.5px" width="11" height="4" viewBox="0 0 11 4"><g fill="#3b8fe2"><circle cx="1.75" cy="1.8" r="1.2"/><circle cx="5.6" cy="1.8" r="1.2"/><circle cx="9.45" cy="1.8" r="1.2"/></g></svg>
<div class="row" style="top:727px"></div>
<svg style="left:257.5px;top:743px" width="6" height="9" viewBox="0 0 6 9"><path d="M0.7,0.6 L4.9,4.5 L0.7,8.4" fill="none" stroke="#222" stroke-width="1.3"/></svg>
<div class="c" style="left:271px;top:727px;letter-spacing:0.05px">Mar 2, 2021 1:16:31 AM</div>
<div class="c" style="left:430px;top:727px;color:#2a9ad4;letter-spacing:0.33px">614651390609</div>
<div class="c" style="left:537px;top:727px;letter-spacing:0.4px">Automatic Payment</div>
<div class="c" style="left:672px;top:727px;letter-spacing:-0.35px">SALE</div>
<div class="c" style="left:715px;top:727px;color:#3db56b;letter-spacing:-0.42px">COMPLETE</div>
<div class="c" style="left:797px;top:727px;letter-spacing:0.33px">4444333322221111</div>
<svg style="left:940px;top:740.5px" width="24" height="15" viewBox="0 0 24 15"><rect x="0" y="0" width="24" height="15" fill="#fff"/><rect x="0" y="0" width="24" height="2.8" rx="0.5" fill="#1a1f71"/><rect x="0" y="12.6" width="24" height="2.4" rx="0.5" fill="#f7b600"/><text x="11.6" y="11" font-size="9.6" font-weight="bold" font-style="italic" font-family="Liberation Sans" fill="#1a1f71" text-anchor="middle" letter-spacing="-0.75">VISA</text></svg>
<div class="c" style="left:971px;top:727px;letter-spacing:0.25px">444433</div>
<svg style="left:1016.6px;top:745.9px" width="27" height="3" viewBox="0 0 27 3"><g fill="#151515"><circle cx="1.50" cy="1.5" r="1.5"/><circle cx="6.04" cy="1.5" r="1.5"/><circle cx="10.58" cy="1.5" r="1.5"/><circle cx="15.12" cy="1.5" r="1.5"/><circle cx="19.66" cy="1.5" r="1.5"/><circle cx="24.20" cy="1.5" r="1.5"/></g></svg>
<div class="c" style="left:1044px;top:727px;letter-spacing:0.45px">1111 01/32</div>
<svg style="left:1118px;top:739.2px" width="12" height="14" viewBox="0 0 12 14"><path d="M3,6.6 V3.4 A2.8,2.8 0 0 1 8.6,3.4 V6.6" fill="none" stroke="#b3b3b3" stroke-width="1.2"/><rect x="0.6" y="6.4" width="10.6" height="6.6" rx="1" fill="none" stroke="#b3b3b3" stroke-width="1.2"/></svg>
<div class="c" style="left:1177px;top:727px">USD 11.00</div>
<div class="c" style="left:1255px;top:727px;letter-spacing:0.3px">176004</div>
<svg style="left:1349px;top:744.5px" width="11" height="4" viewBox="0 0 11 4"><g fill="#3b8fe2"><circle cx="1.75" cy="1.8" r="1.2"/><circle cx="5.6" cy="1.8" r="1.2"/><circle cx="9.45" cy="1.8" r="1.2"/></g></svg>
<div class="a" style="left:241px;top:358px;width:3px;height:410px;background:#2cb25a"></div>
</body></html>
